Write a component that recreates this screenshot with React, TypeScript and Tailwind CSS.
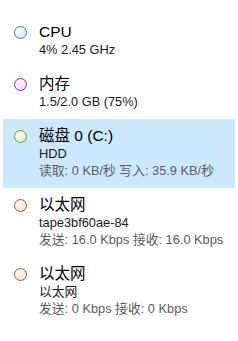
import React from 'react';

interface Item {
  title: string;
  lines: string[];
  muted?: string;
  ring: string;
  selected?: boolean;
}

const items: Item[] = [
  {
    title: 'CPU',
    lines: ['4% 2.45 GHz'],
    ring: 'border-[#2a7fc0] bg-linear-to-br from-white to-[#d6e6f4]',
  },
  {
    title: '内存',
    lines: ['1.5/2.0 GB (75%)'],
    ring: 'border-[#9120b8] bg-linear-to-br from-white to-[#ead6f3]',
  },
  {
    title: '磁盘 0 (C:)',
    lines: ['HDD'],
    muted: '读取: 0 KB/秒 写入: 35.9 KB/秒',
    ring: 'border-[#56a81a] bg-linear-to-br from-white to-[#d9edcc]',
    selected: true,
  },
  {
    title: '以太网',
    lines: ['tape3bf60ae-84'],
    muted: '发送: 16.0 Kbps 接收: 16.0 Kbps',
    ring: 'border-[#a9561a] bg-linear-to-br from-white to-[#f5e0d0]',
  },
  {
    title: '以太网',
    lines: ['以太网'],
    muted: '发送: 0 Kbps 接收: 0 Kbps',
    ring: 'border-[#a9561a] bg-linear-to-br from-white to-[#f5e0d0]',
  },
];

export default function App() {
  return (
    <div
      className="w-[238px] h-[341px] bg-white pt-[15px] px-[3px] text-[#1a1a1a]"
      style={{ fontFamily: '"Liberation Sans", "Noto Sans CJK SC", sans-serif' }}
    >
      {items.map((item, i) => (
        <div
          key={i}
          className={
            item.selected
              ? 'flex gap-[12px] pl-[11px] pt-[8px] pb-[9px] bg-[#cce8ff]'
              : 'flex gap-[12px] pl-[11px] pt-[8px] pb-[9px]'
          }
        >
          <div className="h-[18px] flex items-center shrink-0">
            <div className={'w-[13px] h-[13px] rounded-full border ' + item.ring} />
          </div>
          <div className="flex flex-col">
            <div className="text-[15.5px] leading-[18px] text-black whitespace-nowrap">{item.title}</div>
            {item.lines.map((l) => (
              <div key={l} className="text-[12.8px] leading-[17px] text-[#1a1a1a] whitespace-nowrap">
                {l}
              </div>
            ))}
            {item.muted && (
              <div className="text-[12.8px] leading-[17px] text-[#5c5c5c] whitespace-nowrap">{item.muted}</div>
            )}
          </div>
        </div>
      ))}
    </div>
  );
}
